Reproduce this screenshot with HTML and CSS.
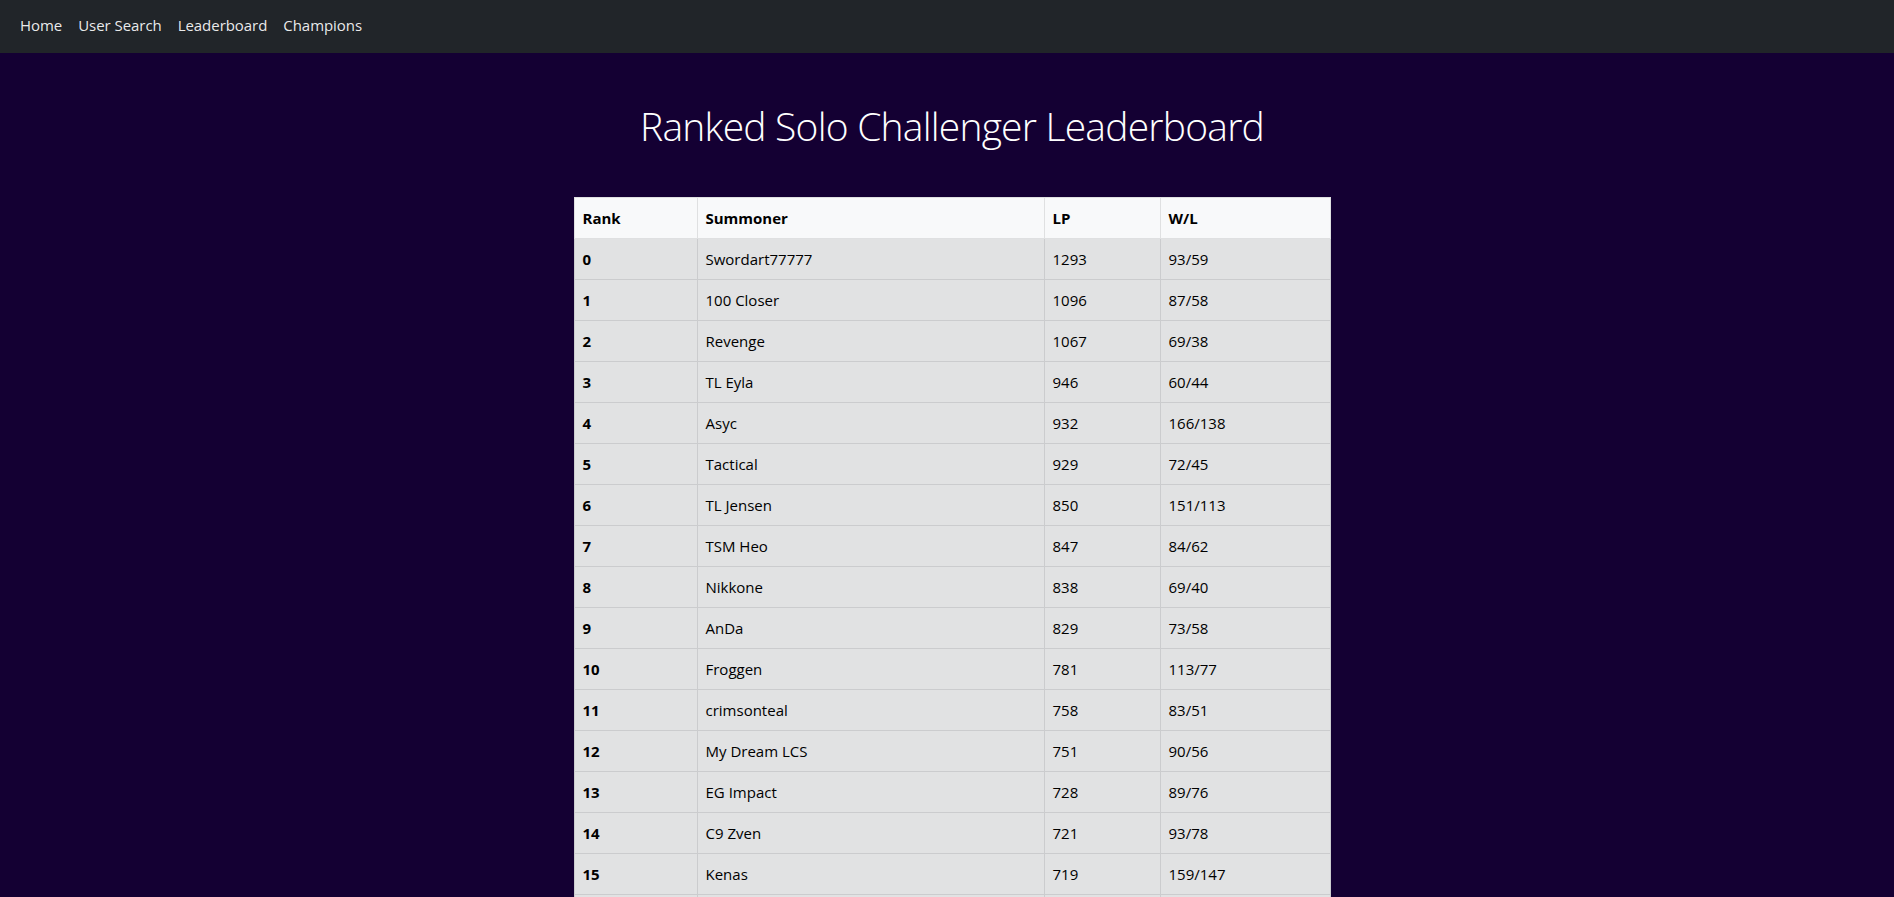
FILE: index.html
```html
<!DOCTYPE html>
<html lang="en">
<head>
<meta charset="utf-8">
<title>Ranked Solo Challenger Leaderboard</title>
<link rel="stylesheet" href="styles.css">
</head>
<body>
<nav class="navbar">
  <a class="nav-link" href="#">Home</a>
  <a class="nav-link" href="#">User Search</a>
  <a class="nav-link" href="#">Leaderboard</a>
  <a class="nav-link" href="#">Champions</a>
</nav>
<main class="main">
  <h1 class="title">Ranked Solo Challenger Leaderboard</h1>
  <div class="table-wrap">
    <table class="board">
      <colgroup>
        <col class="c-rank"><col class="c-name"><col class="c-lp"><col class="c-wl">
      </colgroup>
      <thead>
        <tr><th>Rank</th><th>Summoner</th><th>LP</th><th>W/L</th></tr>
      </thead>
      <tbody>
        <tr><th>0</th><td>Swordart77777</td><td>1293</td><td>93/59</td></tr>
        <tr><th>1</th><td>100 Closer</td><td>1096</td><td>87/58</td></tr>
        <tr><th>2</th><td>Revenge</td><td>1067</td><td>69/38</td></tr>
        <tr><th>3</th><td>TL Eyla</td><td>946</td><td>60/44</td></tr>
        <tr><th>4</th><td>Asyc</td><td>932</td><td>166/138</td></tr>
        <tr><th>5</th><td>Tactical</td><td>929</td><td>72/45</td></tr>
        <tr><th>6</th><td>TL Jensen</td><td>850</td><td>151/113</td></tr>
        <tr><th>7</th><td>TSM Heo</td><td>847</td><td>84/62</td></tr>
        <tr><th>8</th><td>Nikkone</td><td>838</td><td>69/40</td></tr>
        <tr><th>9</th><td>AnDa</td><td>829</td><td>73/58</td></tr>
        <tr><th>10</th><td>Froggen</td><td>781</td><td>113/77</td></tr>
        <tr><th>11</th><td>crimsonteal</td><td>758</td><td>83/51</td></tr>
        <tr><th>12</th><td>My Dream LCS</td><td>751</td><td>90/56</td></tr>
        <tr><th>13</th><td>EG Impact</td><td>728</td><td>89/76</td></tr>
        <tr><th>14</th><td>C9 Zven</td><td>721</td><td>93/78</td></tr>
        <tr><th>15</th><td>Kenas</td><td>719</td><td>159/147</td></tr>
        <tr><th>&nbsp;</th><td>&nbsp;</td><td>&nbsp;</td><td>&nbsp;</td></tr>
      </tbody>
    </table>
  </div>
</main>
</body>
</html>
```
FILE: styles.css
```css
html, body {
  margin: 0;
  padding: 0;
}
body {
  background: #140033;
  font-family: "Open Sans", "Noto Sans", sans-serif;
  font-size: 15px;
  line-height: 24px;
  color: #212529;
}
.navbar {
  display: flex;
  align-items: center;
  height: 53px;
  padding: 0 0 4px 12px;
  background: #212529;
  box-sizing: border-box;
}
.nav-link {
  display: block;
  padding: 0 8px;
  color: rgba(255, 255, 255, 0.92);
  text-decoration: none;
  font-size: 15px;
  letter-spacing: -0.05px;
}
.main {
  padding: 49px 0 0 10px;
}
.title {
  margin: 0 0 47px;
  text-align: center;
  color: #ffffff;
  font-size: 39px;
  line-height: 48px;
  font-weight: 300;
  letter-spacing: -0.78px;
}
.table-wrap {
  display: flex;
  justify-content: center;
}
.board {
  width: 756px;
  border-collapse: collapse;
  table-layout: fixed;
}
.c-rank { width: 123px; }
.c-name { width: 347px; }
.c-lp { width: 116px; }
.c-wl { width: 170px; }
.board th, .board td {
  padding: 8px 8px;
  text-align: left;
  height: 24px;
  white-space: nowrap;
}
.board thead th {
  background: #f8f9fa;
  border: 1px solid #dfe0e1;
  font-weight: 700;
  color: #000;
}
.board tbody th, .board tbody td {
  background: #e1e2e3;
  border: 1px solid #cbccce;
  color: #000;
}
.board tbody th {
  font-weight: 700;
}
.board tbody td {
  font-weight: 400;
}
```
